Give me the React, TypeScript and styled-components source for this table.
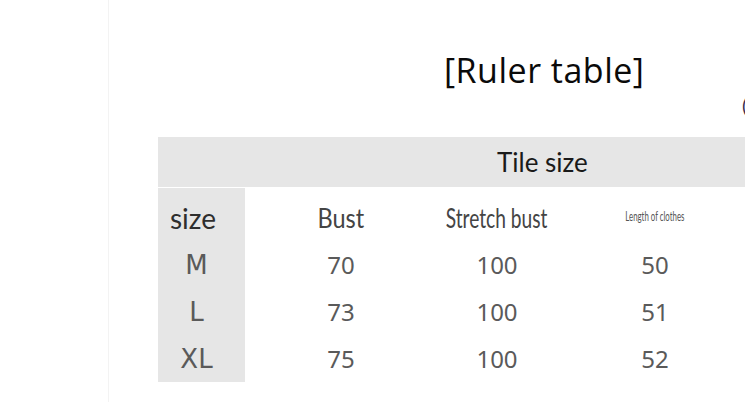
import React from "react";
import styled, { createGlobalStyle } from "styled-components";

const Global = createGlobalStyle`
  html, body { margin: 0; padding: 0; background: #ffffff; }
  body { overflow: hidden; width: 745px; height: 402px; }
`;

const Page = styled.div`
  display: flex;
  width: 745px;
  height: 402px;
  overflow: hidden;
`;

const Gutter = styled.div`
  flex: 0 0 108px;
  border-right: 1px solid #f3f3f3;
`;

const Content = styled.div`
  flex: 1;
  min-width: 0;
  overflow: hidden;
  padding-top: 48px;
`;

const Title = styled.h1`
  margin: 0;
  padding-left: 335px;
  font-family: "Open Sans", sans-serif;
  font-weight: 400;
  font-size: 34px;
  letter-spacing: 0.5px;
  line-height: 44px;
  color: #0a0a0a;
  white-space: nowrap;
`;

const UnitRow = styled.div`
  height: 45px;
  padding-left: 633px;
  font-family: Lato, sans-serif;
  font-size: 20px;
  line-height: 26px;
  color: #3a3050;
  white-space: nowrap;
`;

const Table = styled.div`
  margin-left: 49px;
  width: 600px;
`;

const Band = styled.div`
  height: 50px;
  background: #e6e6e6;
  display: flex;
  align-items: center;
  padding-left: 339px;
  font-family: Lato, "Open Sans", sans-serif;
  font-size: 26px;
  color: #1a1a1a;
  margin-bottom: 1px;
`;

const Row = styled.div<{ $h: number; $top?: number }>`
  display: grid;
  grid-template-columns: 87px 192px 120px 196px;
  height: ${(p) => p.$h}px;
  & > * { padding-top: ${(p) => p.$top ?? 0}px; }
`;

const SizeCell = styled.div<{ $left?: boolean }>`
  background: #e6e6e6;
  display: flex;
  align-items: center;
  justify-content: ${(p) => (p.$left ? "flex-start" : "center")};
  padding-left: ${(p) => (p.$left ? "12px" : "0")};
  padding-right: ${(p) => (p.$left ? "0" : "10px")};
  font-family: ${(p) => (p.$left ? "Lato, sans-serif" : "\"DejaVu Sans\", sans-serif")};
  font-size: ${(p) => (p.$left ? "28px" : "26px")};
  color: ${(p) => (p.$left ? "#2e2e2e" : "#5a5a5a")};
`;

const HeadCell = styled.div`
  display: flex;
  align-items: center;
  justify-content: center;
  white-space: nowrap;
`;

const Label = styled.span<{ $sx: number }>`
  display: inline-block;
  font-family: Lato, sans-serif;
  font-size: 27px;
  color: #444;
  transform: scaleX(${(p) => p.$sx});
  white-space: nowrap;
`;

const Tiny = styled.span`
  display: inline-block;
  font-family: Lato, sans-serif;
  font-size: 14px;
  color: #555;
  transform: scaleX(0.56);
  white-space: nowrap;
  margin-top: -5px;
`;

const ValueCell = styled.div`
  display: flex;
  align-items: center;
  justify-content: center;
  font-family: "Noto Sans", sans-serif;
  font-size: 24px;
  color: #5a5a5a;
`;

const rows = [
  { size: "M", bust: 70, stretch: 100, length: 50 },
  { size: "L", bust: 73, stretch: 100, length: 51 },
  { size: "XL", bust: 75, stretch: 100, length: 52 },
];

export default function App() {
  return (
    <>
      <Global />
      <Page>
        <Gutter />
        <Content>
          <Title>[Ruler table]</Title>
          <UnitRow>(</UnitRow>
          <Table>
            <Band>Tile size</Band>
            <Row $h={53} $top={6}>
              <SizeCell $left>size</SizeCell>
              <HeadCell>
                <Label $sx={0.87}>Bust</Label>
              </HeadCell>
              <HeadCell>
                <Label $sx={0.71}>Stretch bust</Label>
              </HeadCell>
              <HeadCell>
                <Tiny>Length of clothes</Tiny>
              </HeadCell>
            </Row>
            {rows.map((r) => (
              <Row key={r.size} $h={47}>
                <SizeCell>{r.size}</SizeCell>
                <ValueCell>{r.bust}</ValueCell>
                <ValueCell>{r.stretch}</ValueCell>
                <ValueCell>{r.length}</ValueCell>
              </Row>
            ))}
          </Table>
        </Content>
      </Page>
    </>
  );
}
